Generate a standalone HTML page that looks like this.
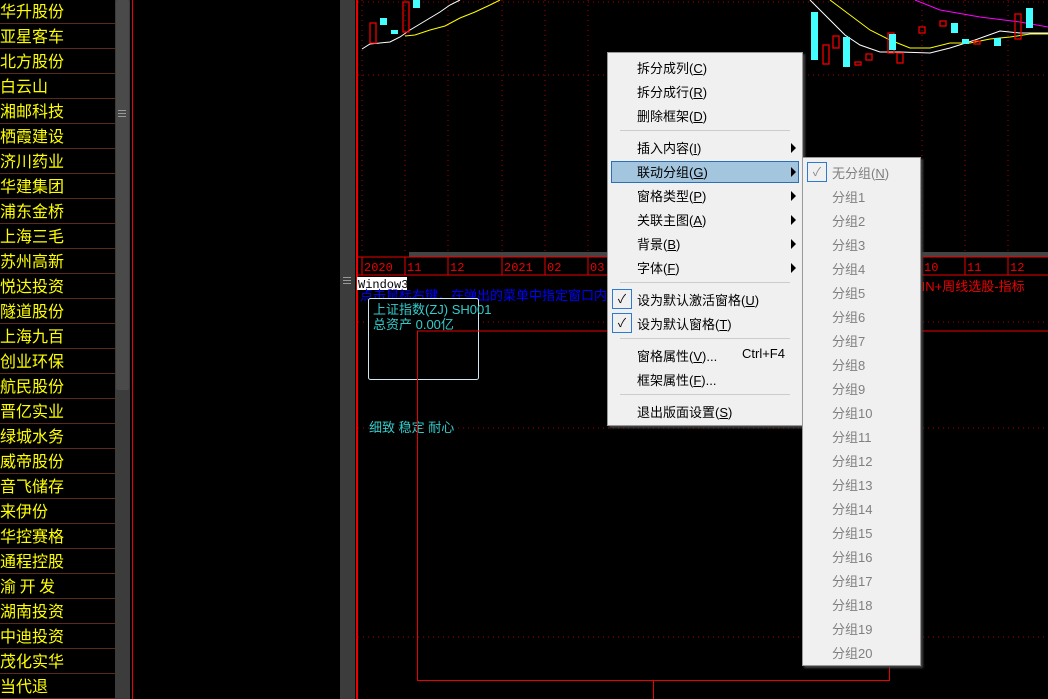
<!DOCTYPE html>
<html><head><meta charset="utf-8"><style>
*{margin:0;padding:0;box-sizing:border-box}
body{width:1048px;height:699px;background:#000;position:relative;overflow:hidden;font-family:"Liberation Sans","Noto Sans CJK SC",sans-serif}
.a{position:absolute}
.row{position:absolute;left:0;width:115px;height:25px;border-bottom:1px solid #5a2a1a;color:#ff0;font-size:16px;line-height:23px;font-family:"WenQuanYi Zen Hei","Noto Sans CJK SC",sans-serif;white-space:nowrap}
.menu{position:absolute;background:#f0f0f0;border:1px solid #999;box-shadow:2px 2px 2px #444;font-size:13px;color:#000}
.mi{position:absolute;left:29px;white-space:nowrap}
.sep{position:absolute;left:12px;right:12px;height:1px;background:#ccc}
.arr{position:absolute;left:183px;width:0;height:0;border-left:5px solid #000;border-top:5px solid transparent;border-bottom:5px solid transparent}
.chk{position:absolute;left:4px;width:20px;height:20px;border:1px solid #2c7bd1;background:#f0f0f0;font-size:12px;text-align:center;line-height:18px}
.si{position:absolute;left:29px;color:#808080;white-space:nowrap}
.grip{position:absolute;width:8px;height:1px;background:#999}
</style></head><body>
<div id="list"></div>
<div class="a" style="left:115px;top:0;width:15px;height:699px;background:#3c3c3c"></div>
<div class="a" style="left:116px;top:0;width:13px;height:390px;background:#4a4a4a;border-radius:2px"></div>
<div class="grip" style="left:118px;top:110px"></div><div class="grip" style="left:118px;top:113px"></div><div class="grip" style="left:118px;top:116px"></div>
<div class="a" style="left:132px;top:0;width:1px;height:699px;background:#e00"></div>
<div class="a" style="left:340px;top:0;width:15px;height:699px;background:#3c3c3c"></div>
<div class="grip" style="left:343px;top:277px"></div><div class="grip" style="left:343px;top:280px"></div><div class="grip" style="left:343px;top:283px"></div>
<div class="a" style="left:356px;top:0;width:2px;height:699px;background:#e00"></div>
<svg class="a" style="left:0;top:0" width="1048" height="699">
<g stroke="#a00" stroke-dasharray="1,4" stroke-width="1">
<line x1="358" y1="2" x2="1048" y2="2"/><line x1="358" y1="75" x2="1048" y2="75"/>
<line x1="358" y1="322" x2="1048" y2="322"/><line x1="358" y1="428" x2="1048" y2="428"/><line x1="358" y1="637" x2="1048" y2="637"/>
<line x1="362" y1="0" x2="362" y2="253"/><line x1="405" y1="0" x2="405" y2="253"/><line x1="448" y1="0" x2="448" y2="253"/><line x1="502" y1="0" x2="502" y2="253"/><line x1="545" y1="0" x2="545" y2="253"/><line x1="588" y1="0" x2="588" y2="253"/><line x1="922" y1="0" x2="922" y2="253"/><line x1="965" y1="0" x2="965" y2="253"/><line x1="1008" y1="0" x2="1008" y2="253"/>
</g>
<rect x="409" y="252" width="639" height="5" fill="#444"/>
<line x1="358" y1="257" x2="1048" y2="257" stroke="#e00"/>
<line x1="358" y1="275" x2="1048" y2="275" stroke="#e00"/>
<g stroke="#e00"><line x1="362" y1="257" x2="362" y2="275"/><line x1="405" y1="257" x2="405" y2="275"/><line x1="448" y1="257" x2="448" y2="275"/><line x1="502" y1="257" x2="502" y2="275"/><line x1="545" y1="257" x2="545" y2="275"/><line x1="588" y1="257" x2="588" y2="275"/><line x1="922" y1="257" x2="922" y2="275"/><line x1="965" y1="257" x2="965" y2="275"/><line x1="1008" y1="257" x2="1008" y2="275"/></g>
<g font-family="Liberation Mono,monospace" font-size="12" fill="#e00"><text x="364" y="271">2020</text><text x="407" y="271">11</text><text x="450" y="271">12</text><text x="504" y="271">2021</text><text x="547" y="271">02</text><text x="590" y="271">03</text><text x="924" y="271">10</text><text x="967" y="271">11</text><text x="1010" y="271">12</text></g>
<polyline fill="none" stroke="#fff" points="362,49 370,44 380,43 390,42 400,37 410,30 420,24 430,18 440,12 450,5 460,0"/>
<polyline fill="none" stroke="#ff0" points="405,36 415,35 430,30 445,26 460,18 475,12 490,5 500,0"/>
<polyline fill="none" stroke="#ff0" points="830,0 850,15 870,30 890,40 910,48 930,48 950,43 970,43 990,39 1010,37 1030,34 1048,34"/>
<polyline fill="none" stroke="#fff" points="810,0 830,20 845,35 860,45 880,52 900,52 930,53 950,48 975,40 1000,31 1020,33 1048,33"/>
<polyline fill="none" stroke="#f0f" points="915,0 940,10 980,17 1020,22 1048,27"/>
<g fill="none" stroke="#e00" stroke-width="1.3"><rect x="370" y="23" width="6" height="20"/><rect x="403" y="2" width="6" height="30"/><rect x="823" y="45" width="6" height="19"/><rect x="833" y="36" width="6" height="12"/><rect x="855" y="62" width="6" height="3"/><rect x="866" y="54" width="6" height="6"/><rect x="888" y="33" width="6" height="20"/><rect x="897" y="53" width="6" height="10"/><rect x="919" y="27" width="6" height="6"/><rect x="940" y="21" width="6" height="5"/><rect x="974" y="41" width="6" height="3"/><rect x="1015" y="14" width="6" height="25"/></g>
<g fill="#4ff"><rect x="380" y="18" width="7" height="7"/><rect x="391" y="30" width="7" height="4"/><rect x="413" y="0" width="7" height="8"/><rect x="811" y="12" width="7" height="48"/><rect x="843" y="37" width="7" height="30"/><rect x="889" y="34" width="7" height="16"/><rect x="951" y="23" width="7" height="10"/><rect x="962" y="39" width="7" height="5"/><rect x="994" y="38" width="7" height="8"/><rect x="1026" y="8" width="7" height="20"/></g>
<rect x="357" y="277" width="50" height="13" fill="#fff"/>
<text x="358" y="288" font-family="Liberation Mono,monospace" font-size="12" fill="#000">Window3</text>
<text x="360" y="300" font-family="WenQuanYi Zen Hei,sans-serif" font-size="13" fill="#00f">点击鼠标右键，在弹出的菜单中指定窗口内</text>
<rect x="368.5" y="298.5" width="110" height="81" fill="#000" stroke="#cfe8f0" rx="2"/>
<text x="373" y="314" font-family="WenQuanYi Zen Hei,sans-serif" font-size="13" fill="#3cc">上证指数(ZJ) SH001</text>
<text x="373" y="329" font-family="WenQuanYi Zen Hei,sans-serif" font-size="13" fill="#3cc">总资产 0.00亿</text>
<text x="369" y="432" font-family="WenQuanYi Zen Hei,sans-serif" font-size="13" fill="#3cc">细致 稳定 耐心</text>
<text x="913" y="291" font-family="WenQuanYi Zen Hei,sans-serif" font-size="13" fill="#e00">AIN+周线选股-指标</text>
<g stroke="#e00" fill="none"><polyline points="1048,331 417.5,331 417.5,680.5 889.5,680.5 889.5,665"/><line x1="653.5" y1="680" x2="653.5" y2="699"/></g>
</svg>
<div class="menu" style="left:607px;top:52px;width:196px;height:374px">
<div class="mi" style="top:5px">拆分成列(<u>C</u>)</div>
<div class="mi" style="top:29px">拆分成行(<u>R</u>)</div>
<div class="mi" style="top:53px">删除框架(<u>D</u>)</div>
<div class="sep" style="top:77px"></div>
<div class="mi" style="top:85px">插入内容(<u>I</u>)</div><div class="arr" style="top:90px"></div>
<div class="a" style="left:3px;top:108px;width:188px;height:22px;background:#a4c5de;border:1px solid #2a6fb8"></div>
<div class="mi" style="top:109px">联动分组(<u>G</u>)</div><div class="arr" style="top:114px"></div>
<div class="mi" style="top:133px">窗格类型(<u>P</u>)</div><div class="arr" style="top:138px"></div>
<div class="mi" style="top:157px">关联主图(<u>A</u>)</div><div class="arr" style="top:162px"></div>
<div class="mi" style="top:181px">背景(<u>B</u>)</div><div class="arr" style="top:186px"></div>
<div class="mi" style="top:205px">字体(<u>F</u>)</div><div class="arr" style="top:210px"></div>
<div class="sep" style="top:229px"></div>
<div class="chk" style="top:236px">✓</div><div class="mi" style="top:237px">设为默认激活窗格(<u>U</u>)</div>
<div class="chk" style="top:260px">✓</div><div class="mi" style="top:261px">设为默认窗格(<u>T</u>)</div>
<div class="sep" style="top:285px"></div>
<div class="mi" style="top:293px">窗格属性(<u>V</u>)...</div><div class="a" style="left:134px;top:293px">Ctrl+F4</div>
<div class="mi" style="top:317px">框架属性(<u>F</u>)...</div>
<div class="sep" style="top:341px"></div>
<div class="mi" style="top:349px">退出版面设置(<u>S</u>)</div>
</div>
<div class="menu" id="sub" style="left:802px;top:157px;width:119px;height:509px">
<div class="chk" style="top:4px;color:#888">✓</div>
</div>
<script>
var n=["华升股份","亚星客车","北方股份","白云山","湘邮科技","栖霞建设","济川药业","华建集团","浦东金桥","上海三毛","苏州高新","悦达投资","隧道股份","上海九百","创业环保","航民股份","晋亿实业","绿城水务","威帝股份","音飞储存","来伊份","华控赛格","通程控股","渝 开 发","湖南投资","中迪投资","茂化实华","当代退"];
var h="";n.forEach(function(s,i){h+='<div class="row" style="top:'+(i*25-1)+'px">'+s+'</div>'});
document.getElementById('list').innerHTML=h;
var s='<div class="si" style="top:5px">无分组(<u>N</u>)</div>';
for(var i=1;i<=20;i++)s+='<div class="si" style="top:'+(5+i*24)+'px">分组'+i+'</div>';
document.getElementById('sub').innerHTML+=s;
</script>
</body></html>
